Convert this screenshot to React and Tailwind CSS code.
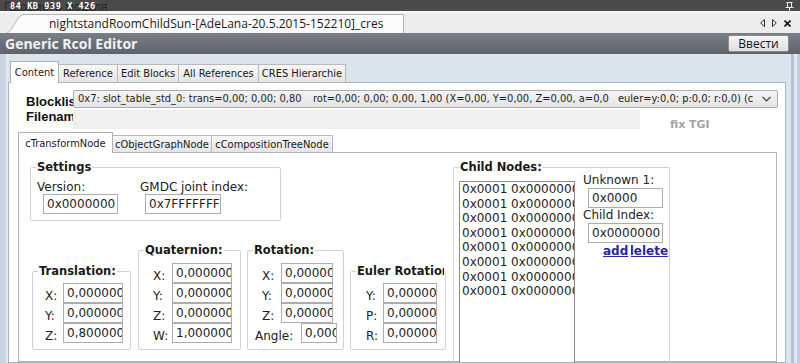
import React from "react";

function TextBox({ className = "", value, bg = "bg-white" }) {
  return (
    <div
      className={
        "h-[20px] shrink-0 border border-[#adadad] pl-[3px] leading-[18px] text-[12px] text-[#1e1e1e] overflow-hidden whitespace-nowrap " +
        bg +
        " " +
        className
      }
    >
      {value}
    </div>
  );
}

function Group({ title, className = "", legendClass = "", children }) {
  return (
    <fieldset className={"min-w-0 border border-[#d2d2d2] rounded-[2px] " + className}>
      <legend
        className={
          "ml-[5px] px-[1px] font-bold text-[11.5px] leading-[14px] text-[#1a1a1a] whitespace-nowrap overflow-hidden " +
          legendClass
        }
      >
        {title}
      </legend>
      {children}
    </fieldset>
  );
}

function Row({ label, labelClass, boxClass, value }) {
  return (
    <div className="flex items-end h-[20px]">
      <span className={"leading-[14px] shrink-0 text-[12px] text-[#222] whitespace-nowrap " + labelClass}>{label}</span>
      <TextBox className={boxClass} value={value} />
    </div>
  );
}

function OuterTab({ children, selected, className = "" }) {
  if (selected)
    return (
      <div
        className={
          "relative z-10 h-[22px] -mb-px bg-white border border-b-0 border-[#a7b1bd] flex items-center justify-center " +
          className
        }
      >
        {children}
      </div>
    );
  return (
    <div
      className={
        "-ml-px h-[18px] bg-linear-to-b from-[#f7f7f7] to-[#e5e5e5] border border-b-0 border-[#b9b9b9] flex items-center justify-center " +
        className
      }
    >
      {children}
    </div>
  );
}

export default function App() {
  const items = Array.from({ length: 8 }, () => "0x0001 0x00000000");
  return (
    <div className="w-[800px] h-[363px] overflow-hidden flex flex-col bg-[#dbe3ed] font-['DejaVu_Sans',sans-serif]">
      {/* top bar */}
      <div className="relative h-[11px] shrink-0 bg-[#4a4a4a] overflow-hidden flex items-start">
        <span className="absolute left-[4px] top-[0px] text-[12px] leading-[14px] text-[#262626] font-['Open_Sans',sans-serif]">
          Просмотр модуля
        </span>
        <span className="relative ml-[10px] mt-[2px] text-[8.5px] leading-[8px] font-bold text-white tracking-[0.6px] font-['DejaVu_Sans_Mono',monospace]">
          84 KB 939 X 426
        </span>
        <svg className="relative ml-auto mr-[6px] mt-[2px]" width="9" height="9" viewBox="0 0 9 9">
          <path d="M1.5 0.5h6M2.5 0.5v5M6.5 0.5v5M0.5 5.5h8M4.5 5.5V9" stroke="#ededed" strokeWidth="1" fill="none" />
        </svg>
      </div>

      {/* document tab strip */}
      <div className="h-[22px] shrink-0 bg-[#ededed] border-t-2 border-[#f8f8f8] flex items-end">
        <svg className="ml-[7px] shrink-0" width="17" height="19" viewBox="0 0 17 19">
          <path d="M0 19 C6 19 9 0.5 17 0.5 L17 19 Z" fill="#fbfbfb" />
          <path d="M0 18.5 C6 18.5 9 0.5 17 0.5" stroke="#b3b3b3" fill="none" />
        </svg>
        <div className="h-[19px] w-[380px] bg-[#fbfbfb] border-t border-r border-[#b3b3b3] pl-[25px] text-[12px] leading-[17px] font-['Open_Sans',sans-serif] text-[#1a1a1a] whitespace-nowrap">
          nightstandRoomChildSun-[AdeLana-20.5.2015-152210]_cres
        </div>
        <div className="ml-auto mr-[9px] self-center flex items-center gap-[7px]">
          <svg width="5" height="8" viewBox="0 0 5 8">
            <path d="M4.5 0.5 L0.7 4 L4.5 7.5 Z" fill="none" stroke="#333" strokeWidth="1" />
          </svg>
          <svg width="5" height="8" viewBox="0 0 5 8">
            <path d="M0.5 0.5 L4.3 4 L0.5 7.5 Z" fill="none" stroke="#333" strokeWidth="1" />
          </svg>
          <svg width="7" height="7" viewBox="0 0 7 7">
            <path d="M0.5 0.5 L6.5 6.5 M6.5 0.5 L0.5 6.5" stroke="#111" strokeWidth="1.6" />
          </svg>
        </div>
      </div>

      {/* header */}
      <div className="h-[21px] shrink-0 bg-linear-to-b from-[#7a7f87] to-[#5e636b] flex items-center pl-[5px] pr-[11px]">
        <span className="font-['Open_Sans',sans-serif] font-bold text-[14px] leading-[18px] text-[#f2f2f2]">
          Generic Rcol Editor
        </span>
        <div className="ml-auto h-[17px] w-[61px] rounded-[2px] border border-[#8a8c8f] bg-linear-to-b from-[#f6f6f6] to-[#dedede] flex items-center justify-center font-['Open_Sans',sans-serif] text-[12px] leading-[15px] text-[#111]">
          Ввести
        </div>
      </div>

      {/* body */}
      <div className="flex-1 min-h-0 flex">
        <div className="w-[8px] shrink-0 flex">
          <div className="w-[6px] bg-[#c9d4e1]" />
          <div className="w-[2px] bg-[#e3e9f0]" />
        </div>

        <div className="w-[778px] shrink-0 flex flex-col min-h-0">
          {/* outer tabs */}
          <div className="mt-[7px] h-[21px] shrink-0 flex items-end pl-[2px] font-['DejaVu_Sans_Condensed','Liberation_Sans',sans-serif] text-[11px] leading-[13px] text-[#1a1a1a]">
            <OuterTab selected className="w-[49px]">Content</OuterTab>
            <OuterTab className="w-[60px]">Reference</OuterTab>
            <OuterTab className="w-[62px]">Edit Blocks</OuterTab>
            <OuterTab className="w-[81px]">All References</OuterTab>
            <OuterTab className="w-[88px]">CRES Hierarchie</OuterTab>
          </div>

          {/* outer panel */}
          <div className="flex-1 min-h-0 bg-white border border-[#a9b3bf] flex flex-col overflow-hidden">
            <div className="flex pl-[17px] mt-[7px]">
              <div className="w-[47px] shrink-0 overflow-hidden pt-[4px] font-['Liberation_Sans',sans-serif] font-bold text-[13px] leading-[15px] text-[#111] whitespace-nowrap">
                <div>Blockliste:</div>
                <div>Filename:</div>
              </div>
              <div className="w-[705px] shrink-0 flex flex-col">
                <div className="h-[18px] border border-[#acacac] rounded-[2px] bg-linear-to-b from-[#f4f4f4] to-[#e4e4e4] flex items-center pl-[4px] pr-[6px] font-['DejaVu_Sans_Condensed','Liberation_Sans',sans-serif] text-[11px] leading-[14px] text-[#1e1e1e] whitespace-nowrap overflow-hidden">
                  <span className="w-[235px] shrink-0 overflow-hidden">0x7: slot_table_std_0: trans=0,00; 0,00; 0,80</span>
                  <span className="w-[305px] shrink-0 overflow-hidden">rot=0,00; 0,00; 0,00, 1,00 (X=0,00, Y=0,00, Z=0,00, a=0,0</span>
                  <span className="flex-1 min-w-0 overflow-hidden">euler=y:0,0; p:0,0; r:0,0) (c</span>
                  <svg className="ml-[4px] shrink-0" width="9" height="6" viewBox="0 0 9 6">
                    <path d="M0.5 0.8 L4.5 5 L8.5 0.8" fill="none" stroke="#3a3a3a" strokeWidth="1.2" />
                  </svg>
                </div>
                <div className="flex items-start mt-[2px]">
                  <div className="h-[19px] w-[567px] bg-[#f0f0f0] border border-[#ececec]" />
                  <span className="ml-[30px] mt-[8px] font-bold text-[11px] leading-[13px] text-[#a3a3a3]">fix TGI</span>
                </div>
              </div>
            </div>

            {/* inner tab control */}
            <div className="mt-[1px] ml-[9px] mr-[8px] flex-1 min-h-0 flex flex-col">
              <div className="h-[20px] shrink-0 flex items-end font-['DejaVu_Sans_Condensed','Liberation_Sans',sans-serif] text-[11px] leading-[13px] text-[#1a1a1a]">
                <div className="relative z-10 h-[21px] -mb-px w-[95px] bg-white border border-b-0 border-[#b0b0b0] flex items-center justify-center">
                  cTransformNode
                </div>
                <div className="-ml-px h-[17px] w-[100px] bg-linear-to-b from-[#f7f7f7] to-[#e5e5e5] border border-b-0 border-[#b9b9b9] flex items-center justify-center">
                  cObjectGraphNode
                </div>
                <div className="-ml-px h-[17px] w-[122px] bg-linear-to-b from-[#f7f7f7] to-[#e5e5e5] border border-b-0 border-[#b9b9b9] flex items-center justify-center">
                  cCompositionTreeNode
                </div>
              </div>

              <div className="flex-1 min-h-0 bg-white border border-[#b4b4b4] flex items-start pt-[7px] pl-[11px]">
                {/* left column */}
                <div className="w-[416px] shrink-0 flex flex-col">
                  <Group title="Settings" className="w-[251px] pb-[6px]">
                    <div className="flex pt-[7px]">
                      <div className="w-[103px] ml-[6px] shrink-0">
                        <div className="text-[12px] leading-[13px] text-[#222]">Version:</div>
                        <TextBox className="ml-[6px] w-[75px]" value="0x0000000" />
                      </div>
                      <div>
                        <div className="text-[12px] leading-[13px] text-[#222] whitespace-nowrap">GMDC joint index:</div>
                        <TextBox className="ml-[5px] w-[76px]" value="0x7FFFFFFF" />
                      </div>
                    </div>
                  </Group>

                  <div className="mt-[22px] ml-[2px] flex items-end">
                    <Group title="Translation:" className="w-[99px] pt-[5px] pb-[6px]">
                      <Row label="X:" labelClass="ml-[12px] w-[18px]" boxClass="w-[60px]" value="0,000000" />
                      <Row label="Y:" labelClass="ml-[12px] w-[18px]" boxClass="w-[60px]" value="0,000000" />
                      <Row label="Z:" labelClass="ml-[12px] w-[18px]" boxClass="w-[60px]" value="0,800000" />
                    </Group>
                    <Group title="Quaternion:" className="ml-[7px] w-[103px] pt-[6px] pb-[6px]">
                      <Row label="X:" labelClass="ml-[14px] w-[19px]" boxClass="w-[60px]" value="0,000000" />
                      <Row label="Y:" labelClass="ml-[14px] w-[19px]" boxClass="w-[60px]" value="0,000000" />
                      <Row label="Z:" labelClass="ml-[14px] w-[19px]" boxClass="w-[60px]" value="0,000000" />
                      <Row label="W:" labelClass="ml-[14px] w-[19px]" boxClass="w-[60px]" value="1,000000" />
                    </Group>
                    <Group title="Rotation:" className="ml-[6px] w-[97px] pt-[6px] pb-[6px]">
                      <Row label="X:" labelClass="ml-[14px] w-[19px]" boxClass="w-[52px]" value="0,000000" />
                      <Row label="Y:" labelClass="ml-[14px] w-[19px]" boxClass="w-[52px]" value="0,000000" />
                      <Row label="Z:" labelClass="ml-[14px] w-[19px]" boxClass="w-[52px]" value="0,000000" />
                      <Row label="Angle:" labelClass="ml-[7px] w-[46px]" boxClass="w-[36px]" value="0,000000" />
                    </Group>
                    <Group title="Euler Rotation:" legendClass="max-w-[88px]" className="ml-[6px] w-[96px] pt-[5px] pb-[6px]">
                      <Row label="Y:" labelClass="ml-[15px] w-[17px]" boxClass="w-[54px]" value="0,000000" />
                      <Row label="P:" labelClass="ml-[15px] w-[17px]" boxClass="w-[54px]" value="0,000000" />
                      <Row label="R:" labelClass="ml-[15px] w-[17px]" boxClass="w-[54px]" value="0,000000" />
                    </Group>
                  </div>
                </div>

                {/* child nodes */}
                <Group title="Child Nodes:" className="ml-[7px] w-[217px] h-[260px]">
                  <div className="flex items-start">
                    <div className="ml-[5px] mt-[7px] w-[116px] h-[240px] shrink-0 border border-[#85888e] bg-white overflow-hidden pl-[2px] text-[12px] leading-[14.6px] text-[#1e1e1e] whitespace-nowrap">
                      {items.map((t, i) => (
                        <div key={i}>{t}</div>
                      ))}
                    </div>
                    <div className="ml-[8px] flex flex-col">
                      <div className="text-[12px] leading-[13px] text-[#222] whitespace-nowrap">Unknown 1:</div>
                      <TextBox className="ml-[5px] mt-[1px] w-[75px]" value="0x0000" />
                      <div className="mt-[1px] text-[12px] leading-[13px] text-[#222] whitespace-nowrap">Child Index:</div>
                      <TextBox className="ml-[5px] mt-[1px] w-[75px]" value="0x0000000" />
                      <div className="mt-[1px] ml-[20px] flex font-bold text-[12px] leading-[14px] text-[#2727a6] underline">
                        <span className="relative z-10 bg-white pr-[3px]">add</span>
                        <span className="-ml-[6px]">delete</span>
                      </div>
                    </div>
                  </div>
                </Group>
              </div>
            </div>
          </div>
        </div>

        <div className="w-[14px] shrink-0 flex">
          <div className="w-[5px] bg-[#dce5ef]" />
          <div className="w-[3px] bg-[#b5c3d4]" />
          <div className="w-[3px] bg-[#e1e8f1]" />
          <div className="w-[3px] bg-[#c2cedc]" />
        </div>
      </div>
    </div>
  );
}
